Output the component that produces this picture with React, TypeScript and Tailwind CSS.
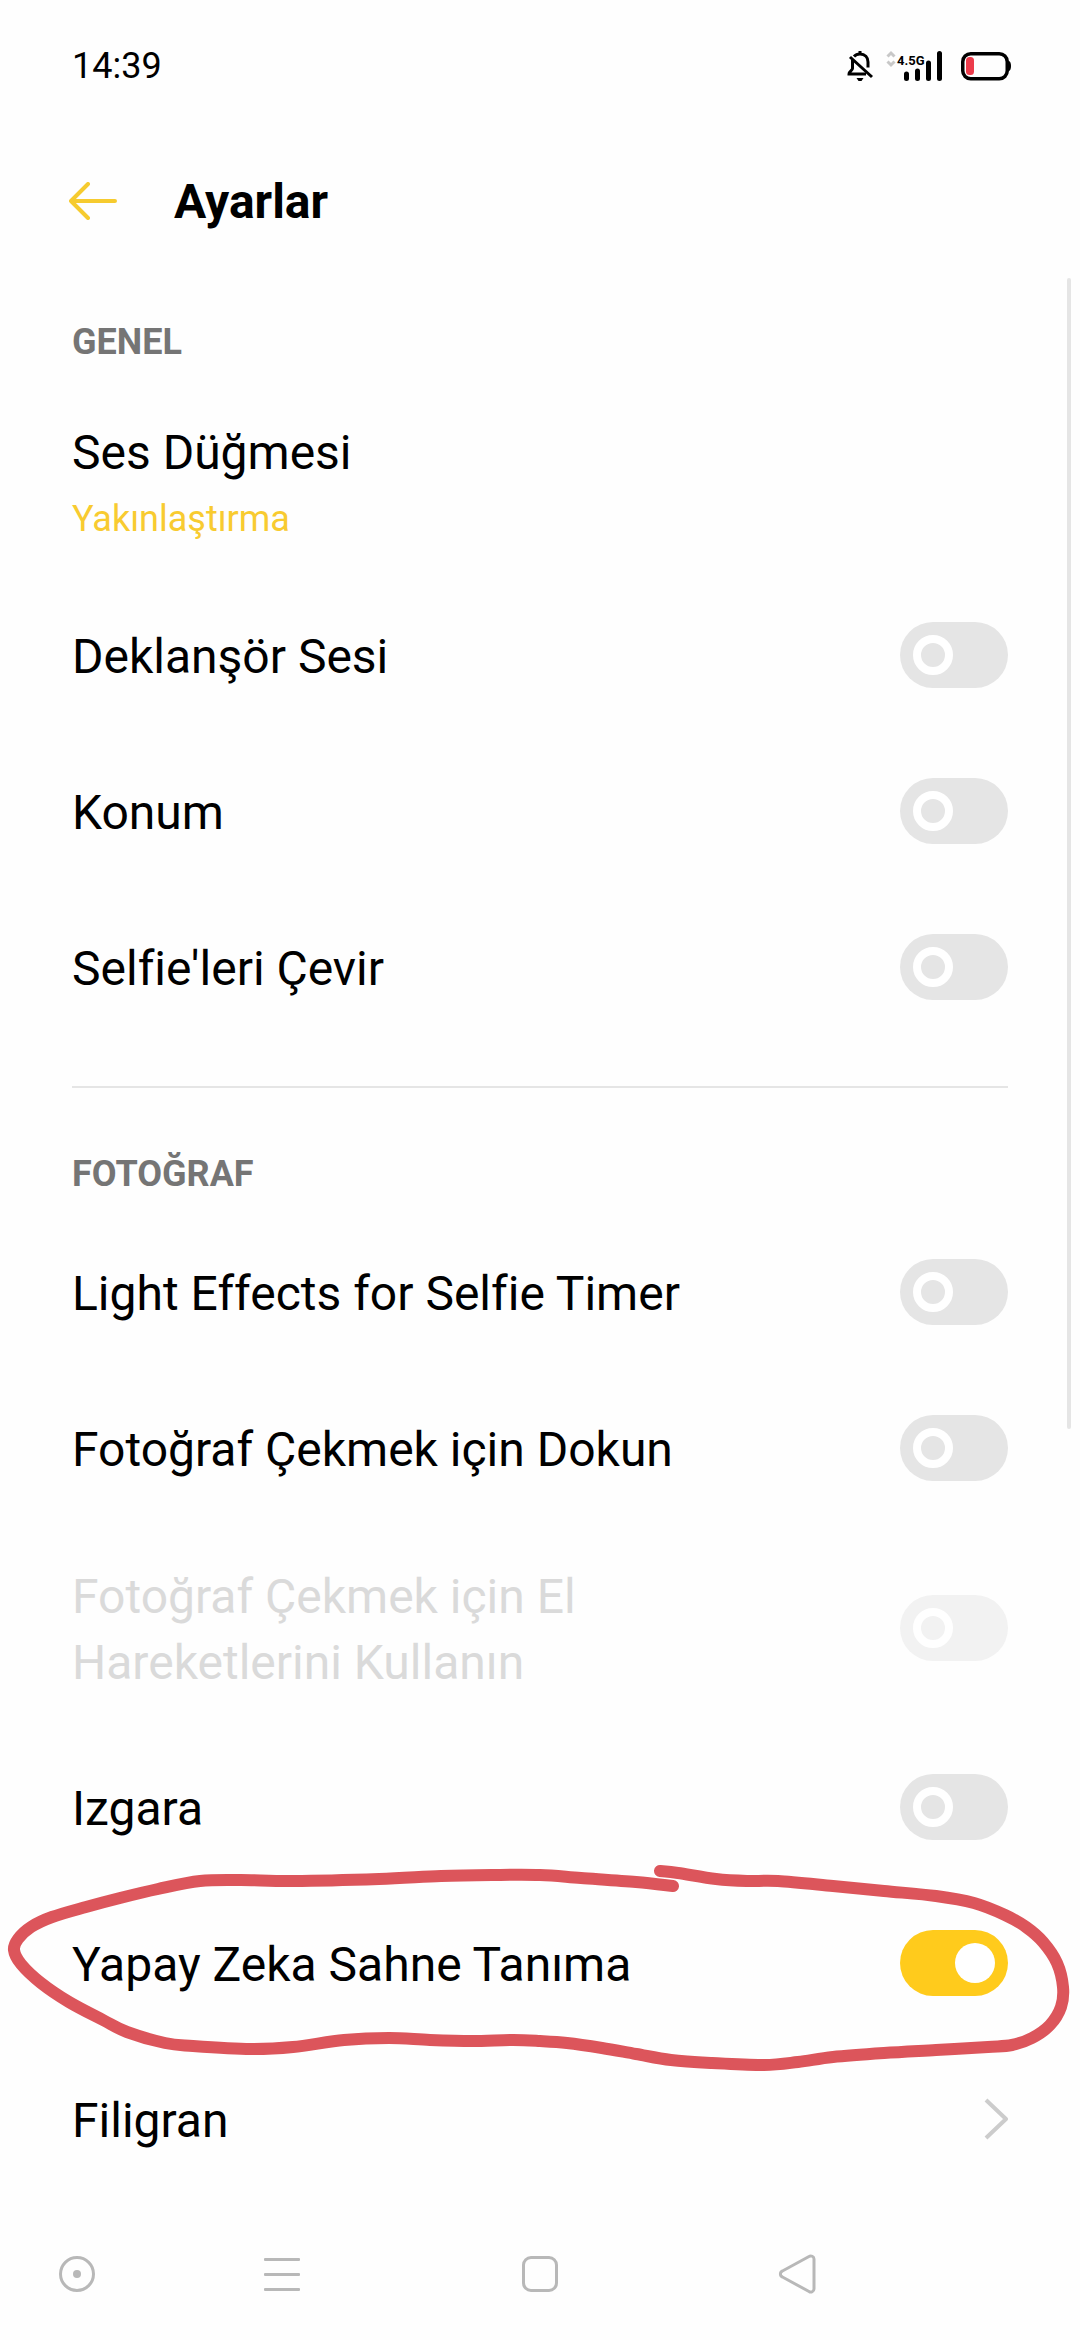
import { useId, useState } from "react";

type Point = [number, number];

// Hand-drawn ring round the highlighted row, one long stroke.
const RING: Point[] = [
  [660, 10], [678, 12], [716, 18], [747, 20], [778, 20], [833, 25], [884, 30],
  [936, 35], [974, 42], [1005, 54], [1026, 66], [1043, 81], [1057, 102],
  [1063, 126], [1061, 146], [1050, 164], [1032, 177], [1012, 184], [988, 186],
  [936, 189], [884, 192], [833, 196], [798, 201], [764, 204], [712, 202],
  [671, 199], [636, 193], [602, 187], [567, 182], [540, 180], [513, 179],
  [472, 180], [430, 179], [389, 177], [344, 179], [293, 186], [251, 188],
  [193, 185], [165, 182], [127, 171], [103, 159], [69, 141], [41, 122],
  [21, 103], [14, 89], [18, 78], [31, 66], [52, 56], [86, 46], [120, 37],
  [158, 28], [200, 20], [241, 19], [293, 20], [379, 18], [441, 15], [492, 14],
  [540, 14], [581, 17], [636, 21], [673, 25],
];

function smooth(points: Point[]) {
  let d = `M${points[0][0]} ${points[0][1]}`;
  for (let i = 0; i < points.length - 1; i++) {
    const a = points[Math.max(i - 1, 0)];
    const b = points[i];
    const c = points[i + 1];
    const e = points[Math.min(i + 2, points.length - 1)];
    d += `C${b[0] + (c[0] - a[0]) / 6} ${b[1] + (c[1] - a[1]) / 6} ${c[0] - (e[0] - b[0]) / 6} ${c[1] - (e[1] - b[1]) / 6} ${c[0]} ${c[1]}`;
  }
  return d;
}

function Ring() {
  return (
    <svg
      viewBox="0 0 1080 210"
      preserveAspectRatio="none"
      className="pointer-events-none absolute inset-x-0 -top-6 h-[210px] w-full"
      fill="none"
      stroke="#dc555b"
      strokeWidth="12"
      strokeLinecap="round"
      strokeLinejoin="round"
      aria-hidden="true"
    >
      <path d={smooth(RING)} />
    </svg>
  );
}

type ToggleRowProps = {
  label: string;
  defaultOn?: boolean;
  disabled?: boolean;
  highlighted?: boolean;
};

function ToggleRow({ label, defaultOn = false, disabled, highlighted }: ToggleRowProps) {
  const id = useId();
  const [on, setOn] = useState(defaultOn);

  return (
    <div
      className={`relative flex items-center justify-between px-[72px] ${
        disabled ? "h-[203px] text-[#dadada]" : "h-[156px]"
      }`}
    >
      <label htmlFor={id} className="max-w-[780px] pt-1 text-[48px] leading-[66px]">
        {label}
      </label>
      <span className="relative h-[66px] w-[108px] shrink-0">
        <input
          id={id}
          type="checkbox"
          role="switch"
          checked={on}
          disabled={disabled}
          onChange={(e) => setOn(e.target.checked)}
          className="block h-full w-full appearance-none rounded-full bg-[#e5e5e5] checked:bg-[#ffcb1c] disabled:bg-[#f2f2f2]"
        />
        <span
          className={`pointer-events-none absolute top-[13px] h-10 w-10 rounded-full border-white ${
            on ? "right-[13px] bg-white" : "left-[13px] border-8"
          }`}
        />
      </span>
      {highlighted ? <Ring /> : null}
    </div>
  );
}

function SectionTitle({ children }: { children: string }) {
  return (
    <h2 className="px-[72px] text-[36px] leading-[48px] font-bold text-[#757575]">
      {children}
    </h2>
  );
}

function StatusBar() {
  return (
    <div className="flex h-[132px] items-center justify-between pr-[68px] pl-[72px]">
      <span className="text-[36px] leading-[48px]">14:39</span>
      <div className="flex items-center">
        <svg width="28" height="32" viewBox="0 0 28 32" fill="none" stroke="#000" strokeWidth="3" aria-hidden="true">
          <path d="M8 6.500C9.500 4.800 11.500 4 14 4c5 0 8 3.500 8 8v5.500M6.500 10v8.500c0 1.800-3.500 2.500-3.500 5.500h17" />
          <path d="M14 1v3M4 7l22 20" />
          <path d="M10.500 28h7l-2 3h-3z" fill="#000" stroke="none" />
        </svg>
        <svg width="58" height="32" viewBox="0 0 58 32" className="ml-3" aria-label="4.5G">
          <path d="M1.500 6.500 5 3l3.500 3.500M1.500 11.500 5 15l3.500-3.500" fill="none" stroke="#c8c8c8" strokeWidth="3" />
          <text x="11" y="15" className="text-[13px] font-bold">
            4.5G
          </text>
          <g stroke="#000" strokeWidth="5" strokeLinecap="round">
            <path d="M20.500 24v4.500M31.500 21v7.500M42.500 13v15.500M53.500 3.500v25" />
          </g>
        </svg>
        <svg width="51" height="30" viewBox="0 0 51 30" className="ml-[17px]" aria-hidden="true">
          <rect x="1.750" y="2.750" width="44.500" height="25" rx="8" fill="none" stroke="#000" strokeWidth="3.500" />
          <path d="M47 9.500c2.500.8 3 3 3 5.500s-.5 4.700-3 5.500z" />
          <rect x="5" y="6" width="8" height="18" rx="3.500" fill="#ec3b4b" />
        </svg>
      </div>
    </div>
  );
}

function NavBar() {
  const button = "flex items-center justify-center";
  return (
    <nav className="mt-auto grid h-[132px] grid-cols-[153fr_258fr_258fr_258fr_153fr] text-[#b8b8b8]">
      <button type="button" aria-label="Asistan" className={button}>
        <svg width="36" height="36" viewBox="0 0 36 36" fill="none" stroke="currentColor" strokeWidth="3">
          <circle cx="18" cy="18" r="16.500" />
          <circle cx="18" cy="18" r="4" fill="currentColor" stroke="none" />
        </svg>
      </button>
      <button type="button" aria-label="Son uygulamalar" className={button}>
        <svg width="36" height="36" viewBox="0 0 36 36" fill="currentColor">
          <rect y="2" width="36" height="3" rx="1" />
          <rect y="17" width="36" height="3" rx="1" />
          <rect y="32" width="36" height="3" rx="1" />
        </svg>
      </button>
      <button type="button" aria-label="Ana ekran" className={button}>
        <svg width="36" height="36" viewBox="0 0 36 36" fill="none" stroke="currentColor" strokeWidth="3">
          <rect x="1.500" y="1.500" width="33" height="33" rx="7.500" />
        </svg>
      </button>
      <button type="button" aria-label="Geri" className={button}>
        <svg width="40" height="40" viewBox="0 0 40 40" fill="none" stroke="currentColor" strokeWidth="3">
          <path d="M31 2.500 4.500 17a3.200 3.200 0 0 0 0 6L31 37.500a3.200 3.200 0 0 0 5-2.500V5a3.200 3.200 0 0 0-5-2.500z" />
        </svg>
      </button>
    </nav>
  );
}

export default function App() {
  return (
    <div className="flex min-h-screen flex-col bg-[#fefefe] font-[Roboto,sans-serif] text-black [font-variant-ligatures:none]">
      <StatusBar />

      <header className="flex h-[138px] items-center pl-[69px]">
        <button type="button" aria-label="Geri dön" className="text-[#f6cb2f]">
          <svg
            width="48"
            height="38"
            viewBox="0 0 48 38"
            fill="none"
            stroke="currentColor"
            strokeWidth="4"
            strokeLinecap="round"
            strokeLinejoin="round"
          >
            <path d="M46 19H2M19 2 2 19l17 17" />
          </svg>
        </button>
        <h1 className="ml-[57px] pt-0.5 text-[48px] leading-[66px] font-bold">Ayarlar</h1>
      </header>

      <main className="relative">
        <section className="pt-12">
          <SectionTitle>GENEL</SectionTitle>
          <button type="button" className="mt-[54px] block w-full px-[72px] pb-[31px] text-left">
            <span className="block text-[48px] leading-[66px]">Ses Düğmesi</span>
            <span className="mt-1.5 block text-[36px] leading-[54px] text-[#f8cb30]">
              Yakınlaştırma
            </span>
          </button>
          <ToggleRow label="Deklanşör Sesi" />
          <ToggleRow label="Konum" />
          <ToggleRow label="Selfie'leri Çevir" />
        </section>

        <hr className="mx-[72px] mt-[41px] border-t-2 border-[#e5e5e5]" />

        <section className="pt-[62px]">
          <SectionTitle>FOTOĞRAF</SectionTitle>
          <div className="pt-4">
            <ToggleRow label="Light Effects for Selfie Timer" />
            <ToggleRow label="Fotoğraf Çekmek için Dokun" />
            <ToggleRow label="Fotoğraf Çekmek için El Hareketlerini Kullanın" disabled />
            <ToggleRow label="Izgara" />
            <ToggleRow label="Yapay Zeka Sahne Tanıma" defaultOn highlighted />
            <button type="button" className="flex h-[156px] w-full items-center justify-between px-[72px]">
              <span className="pt-1 text-[48px] leading-[66px]">Filigran</span>
              <svg
                width="24"
                height="42"
                viewBox="0 0 24 42"
                fill="none"
                stroke="#cccccc"
                strokeWidth="4"
                strokeLinejoin="round"
                aria-hidden="true"
              >
                <path d="M2 2l20 19L2 40" />
              </svg>
            </button>
          </div>
        </section>

        <div className="absolute top-2 right-[9px] h-[1151px] w-1 rounded-full bg-[#e5e5e5]" />
      </main>

      <NavBar />
    </div>
  );
}
